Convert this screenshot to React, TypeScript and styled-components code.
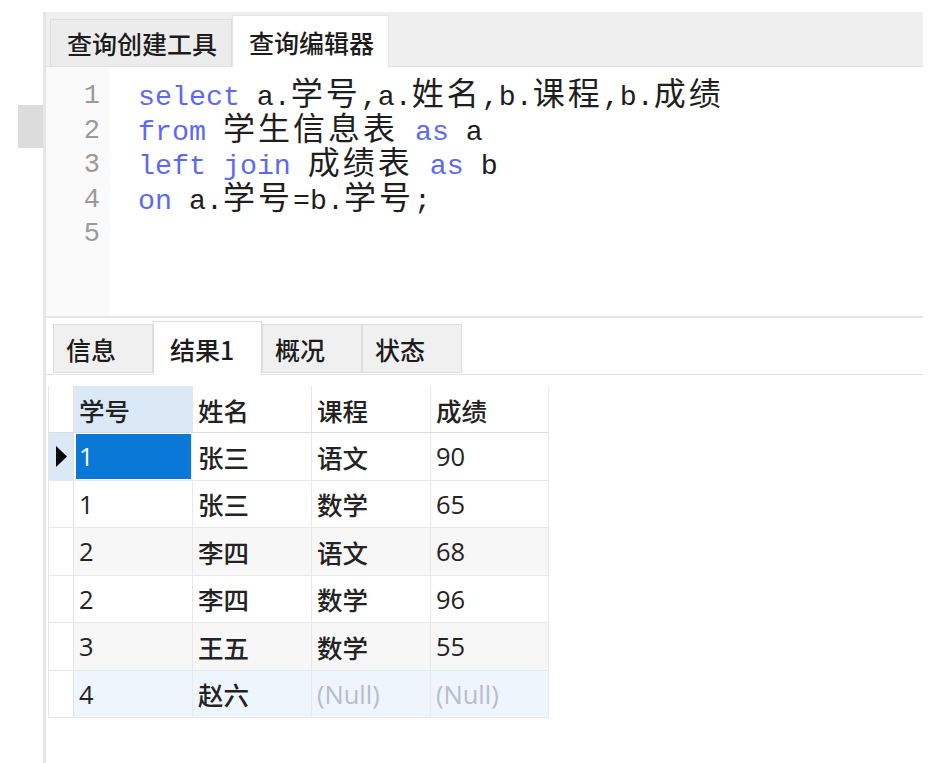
import React from 'react';
import styled, { createGlobalStyle } from 'styled-components';

const GlobalStyle = createGlobalStyle`
  html, body {
    margin: 0;
    padding: 0;
    background: #ffffff;
  }
  body {
    font-family: 'Noto Sans CJK SC', sans-serif;
  }
`;

type Token = { text: string; kw?: boolean };

const codeLines: Token[][] = [
  [{ text: 'select', kw: true }, { text: ' a.学号,a.姓名,b.课程,b.成绩' }],
  [{ text: 'from', kw: true }, { text: ' 学生信息表 ' }, { text: 'as', kw: true }, { text: ' a' }],
  [
    { text: 'left', kw: true },
    { text: ' ' },
    { text: 'join', kw: true },
    { text: ' 成绩表 ' },
    { text: 'as', kw: true },
    { text: ' b' },
  ],
  [{ text: 'on', kw: true }, { text: ' a.学号=b.学号;' }],
  [],
];

type RowData = { id: string; name: string; course: string | null; score: string | null };

const rows: RowData[] = [
  { id: '1', name: '张三', course: '语文', score: '90' },
  { id: '1', name: '张三', course: '数学', score: '65' },
  { id: '2', name: '李四', course: '语文', score: '68' },
  { id: '2', name: '李四', course: '数学', score: '96' },
  { id: '3', name: '王五', course: '数学', score: '55' },
  { id: '4', name: '赵六', course: null, score: null },
];

const rowTone = (i: number): 'plain' | 'stripe' | 'hover' => {
  if (i === rows.length - 1) return 'hover';
  return i % 2 === 0 && i > 0 ? 'stripe' : 'plain';
};

// CJK runs are wider in the editor (two cells each), so they get their own span
const renderText = (text: string) =>
  text.split(/([\u4e00-\u9fff]+)/).map((part, i) =>
    /[\u4e00-\u9fff]/.test(part) ? <Han key={i}>{part}</Han> : part
  );

export default function App() {
  return (
    <>
      <GlobalStyle />
      <Page>
        <Outside>
          <OutsideMarker />
        </Outside>
        <Panel>
          <TopTabs>
            <TopTab>查询创建工具</TopTab>
            <TopTab $active>查询编辑器</TopTab>
          </TopTabs>

          <Editor>
            <Gutter>
              {codeLines.map((_, i) => (
                <LineNo key={i}>{i + 1}</LineNo>
              ))}
            </Gutter>
            <Code>
              {codeLines.map((line, i) => (
                <CodeLine key={i}>
                  {line.map((tok, j) =>
                    tok.kw ? <Keyword key={j}>{tok.text}</Keyword> : <span key={j}>{renderText(tok.text)}</span>
                  )}
                </CodeLine>
              ))}
            </Code>
          </Editor>

          <ResultTabs>
            <ResultTab>信息</ResultTab>
            <ResultTab $active>结果1</ResultTab>
            <ResultTab>概况</ResultTab>
            <ResultTab>状态</ResultTab>
          </ResultTabs>

          <GridArea>
            <Grid>
              <HeaderRow>
                <Indicator />
                <HeadCell $selected>学号</HeadCell>
                <HeadCell>姓名</HeadCell>
                <HeadCell>课程</HeadCell>
                <HeadCell>成绩</HeadCell>
              </HeaderRow>
              {rows.map((r, i) => (
                <DataRow key={i} $tone={rowTone(i)}>
                  <Indicator $current={i === 0}>
                    {i === 0 && (
                      <svg width="11" height="21" viewBox="0 0 11 21">
                        <polygon points="0,0 11,10.5 0,21" fill="#000" />
                      </svg>
                    )}
                  </Indicator>
                  <Cell $selected={i === 0}>{r.id}</Cell>
                  <Cell>{r.name}</Cell>
                  <Cell $null={r.course === null}>{r.course ?? '(Null)'}</Cell>
                  <Cell $null={r.score === null}>{r.score ?? '(Null)'}</Cell>
                </DataRow>
              ))}
            </Grid>
          </GridArea>
        </Panel>
      </Page>
    </>
  );
}

const Page = styled.div`
  width: 947px;
  height: 763px;
  display: flex;
  overflow: hidden;
  background: #ffffff;
`;

const Outside = styled.div`
  width: 43px;
  flex-shrink: 0;
  padding-top: 105px;
  display: flex;
  justify-content: flex-end;
`;

const OutsideMarker = styled.div`
  width: 25px;
  height: 43px;
  background: #dcdcdc;
`;

const Panel = styled.div`
  width: 877px;
  margin-top: 12px;
  border-left: 3px solid #e6e6e6;
  display: flex;
  flex-direction: column;
`;

const TopTabs = styled.div`
  height: 54px;
  background: #efefef;
  border-bottom: 1px solid #e0e0e0;
  display: flex;
  align-items: flex-end;
  padding-left: 4px;
`;

const TopTab = styled.div<{ $active?: boolean }>`
  height: ${({ $active }) => ($active ? '52px' : '47px')};
  margin-bottom: ${({ $active }) => ($active ? '-1px' : '0')};
  box-sizing: border-box;
  padding: 0 14px 0 16px;
  display: flex;
  align-items: center;
  background: ${({ $active }) => ($active ? '#ffffff' : '#ececec')};
  border: 1px solid ${({ $active }) => ($active ? '#e4e4e4' : '#dedede')};
  border-bottom: none;
  font-size: 25px;
  font-weight: 500;
  color: #1c1c1c;
  white-space: nowrap;
`;

const Editor = styled.div`
  height: 249px;
  display: flex;
  background: #ffffff;
  border-bottom: 2px solid #e6e6e6;
`;

const Gutter = styled.div`
  width: 64px;
  flex-shrink: 0;
  background: #fafafa;
  padding-top: 12px;
  box-sizing: border-box;
`;

const LineNo = styled.div`
  height: 34.5px;
  line-height: 34.5px;
  padding-right: 10px;
  text-align: right;
  font-family: 'Liberation Mono', monospace;
  font-size: 27px;
  color: #9a9a9a;
`;

const Code = styled.div`
  padding: 8px 0 0 28px;
  flex: 1;
`;

const CodeLine = styled.div`
  height: 34.5px;
  line-height: 34.5px;
  white-space: pre;
  font-family: 'Liberation Mono', monospace;
  font-size: 28.3px;
  color: #1e1e1e;
`;

const Keyword = styled.span`
  color: #5d6af0;
`;

const Han = styled.span`
  font-family: 'Noto Sans CJK SC', sans-serif;
  font-size: 32px;
  letter-spacing: 3px;
  line-height: 1;
  color: #1e1e1e;
`;

const ResultTabs = styled.div`
  height: 57px;
  box-sizing: border-box;
  border-bottom: 1px solid #e2e2e2;
  display: flex;
  align-items: flex-end;
  padding-left: 7px;
`;

const ResultTab = styled.div<{ $active?: boolean }>`
  width: ${({ $active }) => ($active ? '109px' : '100px')};
  height: ${({ $active }) => ($active ? '54px' : '49px')};
  margin-bottom: ${({ $active }) => ($active ? '-1px' : '1px')};
  box-sizing: border-box;
  padding-left: ${({ $active }) => ($active ? '16px' : '12px')};
  display: flex;
  align-items: center;
  background: ${({ $active }) => ($active ? '#ffffff' : '#f0f0f0')};
  border: 1px solid #dddddd;
  border-bottom: ${({ $active }) => ($active ? 'none' : '1px solid #dddddd')};
  font-size: 25px;
  font-weight: 500;
  color: #1c1c1c;
  white-space: nowrap;
`;

const GridArea = styled.div`
  flex: 1;
  padding: 11px 0 0 2px;
`;

const Grid = styled.div`
  width: 500px;
  border-left: 1px solid #e6e6e6;
`;

const rowColumns = `
  display: grid;
  grid-template-columns: 25px 119px 119px 119px 118px;
`;

const HeaderRow = styled.div`
  ${rowColumns}
  height: 46px;
  background: #ffffff;
  border-bottom: 1px solid #dcdcdc;
`;

const DataRow = styled.div<{ $tone: 'plain' | 'stripe' | 'hover' }>`
  ${rowColumns}
  height: 47.5px;
  box-sizing: border-box;
  border-bottom: 1px solid #e8e8e8;
  background: ${({ $tone }) =>
    $tone === 'stripe' ? '#f7f7f7' : $tone === 'hover' ? '#eef5fc' : '#ffffff'};
`;

const Indicator = styled.div<{ $current?: boolean }>`
  border-right: 1px solid #e2e2e2;
  background: ${({ $current }) => ($current ? '#dbe9f7' : '#ffffff')};
  display: flex;
  align-items: center;
  justify-content: center;
`;

const HeadCell = styled.div<{ $selected?: boolean }>`
  border-right: 1px solid #e6e6e6;
  background: ${({ $selected }) => ($selected ? '#dbe9f7' : 'transparent')};
  padding-left: 5px;
  display: flex;
  align-items: center;
  font-size: 25.5px;
  font-weight: 500;
  color: #222222;
`;

const Cell = styled.div<{ $selected?: boolean; $null?: boolean }>`
  border-right: 1px solid #e8e8e8;
  margin: ${({ $selected }) => ($selected ? '1px 1px 1px 2px' : '0')};
  background: ${({ $selected }) => ($selected ? '#0a78d7' : 'transparent')};
  padding-left: ${({ $selected }) => ($selected ? '3px' : '5px')};
  display: flex;
  align-items: center;
  font-family: 'Open Sans', 'Noto Sans CJK SC', sans-serif;
  font-size: 25.5px;
  font-weight: 500;
  color: ${({ $selected, $null }) => ($selected ? '#ffffff' : $null ? '#b9bccd' : '#232323')};
`;
